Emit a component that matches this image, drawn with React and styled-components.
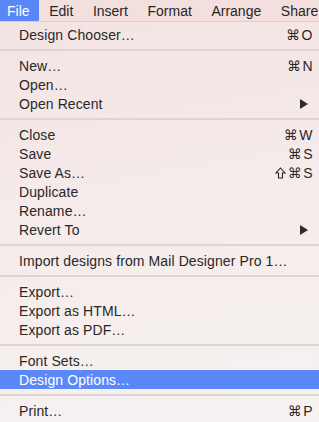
import React from 'react'
import styled, { createGlobalStyle } from 'styled-components'

const Global = createGlobalStyle`
    html, body {
        margin: 0;
        padding: 0;
        width: 319px;
        height: 422px;
        overflow: hidden;
        background: #f5efee;
    }
    body {
        font-family: "Liberation Sans", Arial, sans-serif;
        -webkit-font-smoothing: antialiased;
    }
`

const Page = styled.div`
    width: 319px;
    height: 422px;
    overflow: hidden;
    display: flex;
    flex-direction: column;
`

const MenuBar = styled.div`
    height: 21px;
    flex: none;
    display: flex;
    align-items: stretch;
    background: #f2dfde;
    border-bottom: 1px solid #d9cfcf;
    white-space: nowrap;
`

const BarItem = styled.div`
    display: flex;
    align-items: center;
    padding: 0 9.8px 0 ${p => p.$padLeft || 9.8}px;
    font-size: 14px;
    color: ${p => (p.$active ? '#ffffff' : '#2a2626')};
    background: ${p => (p.$active ? '#5a87f7' : 'transparent')};
`

const Menu = styled.div`
    flex: 1;
    padding-top: 3px;
    background: linear-gradient(170deg, #f3e4e3 0%, #f5edec 55%, #f6f2f1 100%);
    display: flex;
    flex-direction: column;
`

const Row = styled.div`
    height: 19px;
    flex: none;
    display: flex;
    align-items: center;
    justify-content: space-between;
    padding: 0 6px 0 19px;
    font-size: 14px;
    letter-spacing: 0.1px;
    color: ${p => (p.$selected ? '#ffffff' : '#2b2727')};
    background: ${p => (p.$selected ? '#5b88f8' : 'transparent')};
    white-space: nowrap;
`

const Shortcut = styled.span`
    display: flex;
    align-items: center;
    font-size: 14px;
    letter-spacing: 0.5px;
    color: #2b2727;
`

const Sym = styled.span`
    font-family: "DejaVu Sans", sans-serif;
    font-size: 14px;
    margin-right: 1px;
`

const ShiftIcon = styled.svg`
    width: 11px;
    height: 12px;
    margin-right: 2px;
`

const Arrow = styled.span`
    width: 0;
    height: 0;
    margin-right: 5px;
    border-top: 5px solid transparent;
    border-bottom: 5px solid transparent;
    border-left: 8px solid #2f2b2b;
`

const Separator = styled.div`
    height: 12px;
    flex: none;
    display: flex;
    align-items: center;
    &::after {
        content: '';
        flex: 1;
        height: 2px;
        background: #ddd4d3;
    }
`

const bar = [
    { label: 'File', active: true, padLeft: 7 },
    { label: 'Edit' },
    { label: 'Insert' },
    { label: 'Format' },
    { label: 'Arrange' },
    { label: 'Share' },
]

const items = [
    { label: 'Design Chooser…', key: 'O' },
    'sep',
    { label: 'New…', key: 'N' },
    { label: 'Open…' },
    { label: 'Open Recent', sub: true },
    'sep',
    { label: 'Close', key: 'W' },
    { label: 'Save', key: 'S' },
    { label: 'Save As…', shift: true, key: 'S' },
    { label: 'Duplicate' },
    { label: 'Rename…' },
    { label: 'Revert To', sub: true },
    'sep',
    { label: 'Import designs from Mail Designer Pro 1…' },
    'sep',
    { label: 'Export…' },
    { label: 'Export as HTML…' },
    { label: 'Export as PDF…' },
    'sep',
    { label: 'Font Sets…' },
    { label: 'Design Options…', selected: true },
    'sep',
    { label: 'Print…', key: 'P' },
]

const Shift = () => (
    <ShiftIcon viewBox="0 0 11 12">
        <path d="M5.5 1 L10 6 H7.5 V11 H3.5 V6 H1 Z" fill="none" stroke="#2b2727" strokeWidth="1.1" strokeLinejoin="miter" />
    </ShiftIcon>
)

const App = () => {
    return (
        <Page>
            <Global />
            <MenuBar>
                {bar.map(b => (
                    <BarItem key={b.label} $active={b.active} $padLeft={b.padLeft}>{b.label}</BarItem>
                ))}
            </MenuBar>
            <Menu>
                {items.map((it, i) =>
                    it === 'sep' ? (
                        <Separator key={i} />
                    ) : (
                        <Row key={i} $selected={it.selected}>
                            <span>{it.label}</span>
                            {it.key && (
                                <Shortcut>
                                    {it.shift && <Shift />}
                                    <Sym>⌘</Sym>{it.key}
                                </Shortcut>
                            )}
                            {it.sub && <Arrow />}
                        </Row>
                    )
                )}
            </Menu>
        </Page>
    )
}

export default App
